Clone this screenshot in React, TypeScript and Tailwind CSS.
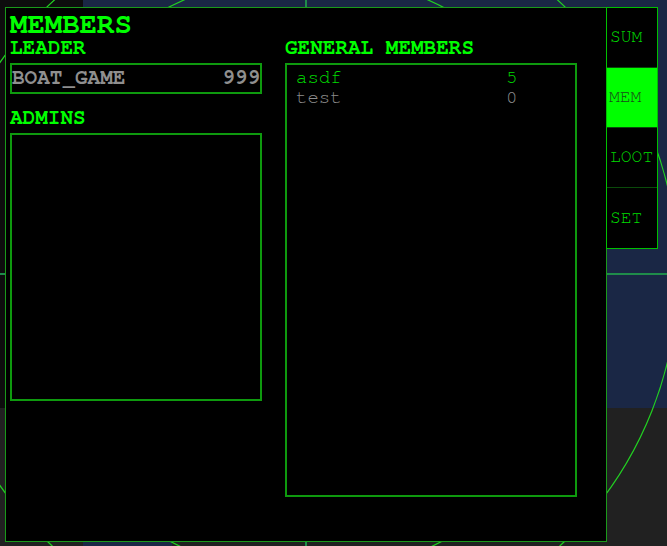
import React from "react";

const MapBackground = () => (
  <svg className="absolute inset-0" width={667} height={546} viewBox="0 0 667 546">
    <rect x={0} y={0} width={667} height={546} fill="#212121" />
    <rect x={0} y={0} width={83} height={408} fill="#0d0d0d" />
    <rect x={83} y={0} width={584} height={408} fill="#1a2745" />
    <rect x={83} y={408} width={89} height={138} fill="#1a2745" />
    <line x1={306} y1={0} x2={306} y2={546} stroke="#1f8c4a" strokeWidth={2} />
    <line x1={0} y1={274} x2={667} y2={274} stroke="#1f8c4a" strokeWidth={2} />
    <circle cx={306} cy={274} r={300} fill="none" stroke="#22d022" strokeWidth={1.2} />
    <circle cx={306} cy={274} r={372} fill="none" stroke="#22d022" strokeWidth={1.2} />
  </svg>
);

const members = [
  { name: "asdf", score: 5, color: "text-[#00dd00]" },
  { name: "test", score: 0, color: "text-[#8c8c8c]" },
];

const tabs = ["SUM", "MEM", "LOOT", "SET"];

export default function App() {
  return (
    <div className="relative w-[667px] h-[546px] overflow-hidden bg-[#212121] font-['Nimbus_Mono_PS','Nimbus_Mono_L','FreeMono','Courier_New','Liberation_Mono',monospace]">
      <MapBackground />
      <div className="absolute left-[5px] top-[7px] flex items-start">
        <div className="w-[602px] h-[535px] border border-[#1a9a1a] bg-black pl-[4px] pt-[4px]">
          <div className="text-[29px] leading-[26px] font-bold text-[#00ff00]">MEMBERS</div>
          <div className="flex gap-[23px]">
            <div className="w-[252px] flex flex-col">
              <div className="text-[21px] leading-[20px] font-bold text-[#00ff00]">LEADER</div>
              <div className="mt-[5px] h-[31px] border-2 border-[#0e9a0e] flex justify-between text-[21px] leading-[25px] font-bold text-[#8f8f8f]">
                <span>BOAT_GAME</span>
                <span>999</span>
              </div>
              <div className="mt-[14px] text-[21px] leading-[20px] font-bold text-[#00ff00]">ADMINS</div>
              <div className="mt-[5px] h-[268px] border-2 border-[#0e9a0e]" />
            </div>
            <div className="w-[292px] flex flex-col">
              <div className="text-[21px] leading-[20px] font-bold text-[#00ff00] whitespace-pre">GENERAL MEMBERS</div>
              <div className="mt-[5px] h-[434px] border-2 border-[#0e9a0e] pt-[3px] pl-[9px]">
                {members.map((m) => (
                  <div key={m.name} className={`flex text-[19px] leading-[20px] ${m.color}`}>
                    <span className="w-[210px]">{m.name}</span>
                    <span>{m.score}</span>
                  </div>
                ))}
              </div>
            </div>
          </div>
        </div>
        <div className="-ml-px w-[52px] border border-[#00c000] bg-black flex flex-col">
          {tabs.map((t, i) => (
            <div
              key={t}
              className={
                t === "MEM"
                  ? "h-[60px] flex items-center pl-[2px] text-[18px] bg-[#00ff00] text-[#1a4a1a] border-b border-[#0a4a0a]"
                  : i === tabs.length - 1
                  ? "h-[60px] flex items-center pl-[3px] text-[18px] text-[#00dd00]"
                  : "h-[60px] flex items-center pl-[3px] text-[18px] text-[#00dd00] border-b border-[#0a4a0a]"
              }
            >
              {t}
            </div>
          ))}
        </div>
      </div>
    </div>
  );
}
